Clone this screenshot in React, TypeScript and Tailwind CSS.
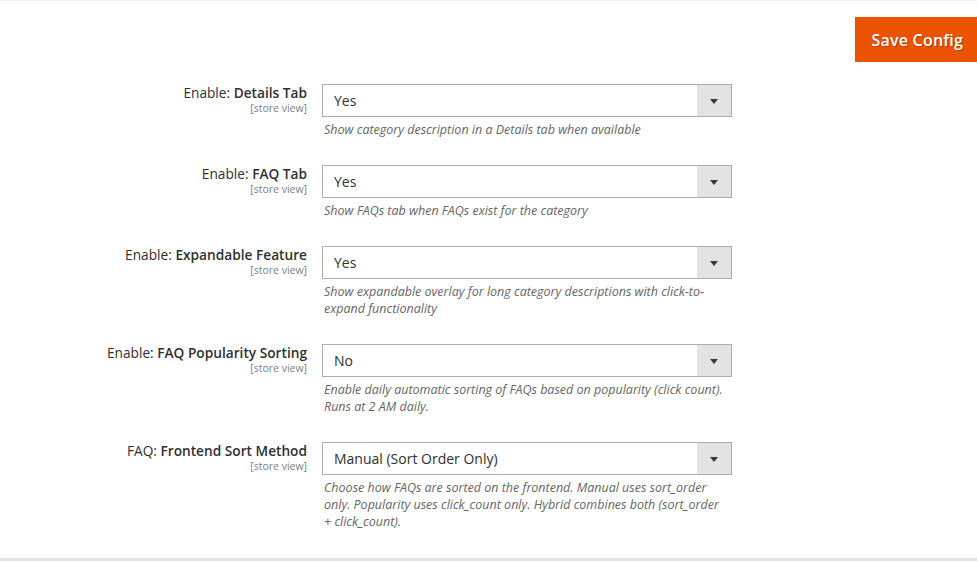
type Campo = {
  prefixo: string;
  nome: string;
  valor: string;
  comentario: string;
};

const CAMPOS: Campo[] = [
  {
    prefixo: 'Enable:',
    nome: 'Details Tab',
    valor: 'Yes',
    comentario: 'Show category description in a Details tab when available',
  },
  {
    prefixo: 'Enable:',
    nome: 'FAQ Tab',
    valor: 'Yes',
    comentario: 'Show FAQs tab when FAQs exist for the category',
  },
  {
    prefixo: 'Enable:',
    nome: 'Expandable Feature',
    valor: 'Yes',
    comentario: 'Show expandable overlay for long category descriptions with click-to-expand functionality',
  },
  {
    prefixo: 'Enable:',
    nome: 'FAQ Popularity Sorting',
    valor: 'No',
    comentario: 'Enable daily automatic sorting of FAQs based on popularity (click count). Runs at 2 AM daily.',
  },
  {
    prefixo: 'FAQ:',
    nome: 'Frontend Sort Method',
    valor: 'Manual (Sort Order Only)',
    comentario:
      'Choose how FAQs are sorted on the frontend. Manual uses sort_order only. Popularity uses click_count only. Hybrid combines both (sort_order + click_count).',
  },
];

export default function App() {
  return (
    <div className="w-[977px] h-[561px] bg-white overflow-hidden flex flex-col font-['Open_Sans',sans-serif] text-[#303030] border-t border-[#f0f0f0]">
      {/* Barra de ações */}
      <div className="flex justify-end pt-4">
        <button className="h-[45px] pl-[17px] pr-[14px] bg-[#eb5202] text-white text-[16px] font-semibold tracking-[0.2px] [text-shadow:1px_1px_0_rgba(0,0,0,0.25)]">
          Save Config
        </button>
      </div>

      {/* Campos de configuração */}
      <div className="flex-1 pt-[22px]">
        {CAMPOS.map((campo) => (
          <div key={campo.nome} className="flex gap-[15px] mb-[27px]">
            <div className="w-[307px] text-right">
              <div className="text-[13.7px] leading-[17px]">
                {campo.prefixo} <span className="font-semibold">{campo.nome}</span>
              </div>
              <div className="text-[10.5px] leading-[14px] text-[#808080]">[store view]</div>
            </div>
            <div className="w-[410px]">
              <div className="h-[33px] flex border border-[#adadad] bg-white">
                <span className="flex-1 pl-[11px] text-[14px] leading-[31px]">{campo.valor}</span>
                <span className="w-[34px] bg-[#e3e3e3] flex items-center justify-center">
                  <svg width="8" height="5" viewBox="0 0 8 5" className="mt-[1px]">
                    <path d="M0 0h8L4 5z" fill="#41362f" />
                  </svg>
                </span>
              </div>
              <p className="mt-[4px] pl-[2px] pr-[5px] text-[12.5px] leading-[17px] italic text-[#666666]">{campo.comentario}</p>
            </div>
          </div>
        ))}
      </div>

      <div className="h-[3px] bg-[#e3e3e3]" />
    </div>
  );
}
